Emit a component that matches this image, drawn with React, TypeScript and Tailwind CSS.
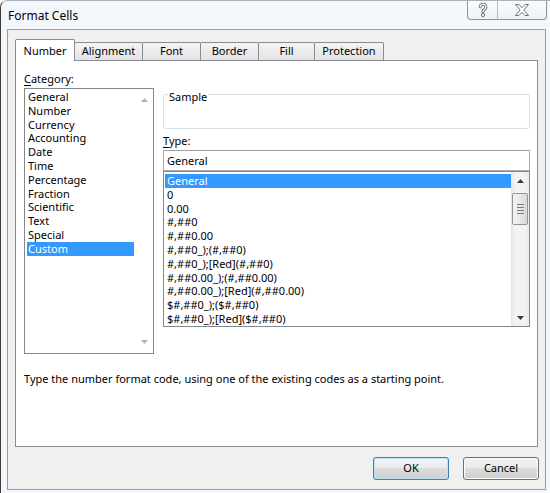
import React from 'react';

const categories = [
  'General',
  'Number',
  'Currency',
  'Accounting',
  'Date',
  'Time',
  'Percentage',
  'Fraction',
  'Scientific',
  'Text',
  'Special',
  'Custom',
];

const types = [
  'General',
  '0',
  '0.00',
  '#,##0',
  '#,##0.00',
  '#,##0_);(#,##0)',
  '#,##0_);[Red](#,##0)',
  '#,##0.00_);(#,##0.00)',
  '#,##0.00_);[Red](#,##0.00)',
  '$#,##0_);($#,##0)',
  '$#,##0_);[Red]($#,##0)',
];

const tabs = [
  { label: 'Number', w: 'w-[60px]', active: true },
  { label: 'Alignment', w: 'w-[69px]' },
  { label: 'Font', w: 'w-[59px]' },
  { label: 'Border', w: 'w-[59px]' },
  { label: 'Fill', w: 'w-[57px]' },
  { label: 'Protection', w: 'w-[70px]' },
];

const Arrow = ({ up, color }: { up?: boolean; color: string }) => (
  <svg width="7" height="4" viewBox="0 0 7 4">
    <polygon points={up ? '0,4 3.5,0 7,4' : '0,0 7,0 3.5,4'} fill={color} />
  </svg>
);

const App: React.FC = () => {
  return (
    <div className="w-[550px] h-[493px] overflow-hidden flex flex-col bg-[#f3f7fb] rounded-tl-[7px] border-l border-t border-l-[#3a3a3a] border-t-[#aab3bd] font-['Noto_Sans',sans-serif] text-[11px] text-black">
      {/* title bar */}
      <div className="h-[28px] flex justify-between">
        <div className="pl-[7px] pt-[7px] leading-[16px] text-[12px]">Format Cells</div>
        <div className="flex h-[20px] -mt-px mr-[3px] border border-t-0 border-[#8d949c] rounded-b-[4px] bg-[linear-gradient(#fbfcfd,#eef2f6)]">
          <div className="w-[30px] flex items-center justify-center border-r border-[#b5bcc4]">
            <svg width="10" height="14" viewBox="0 0 10 14">
              <path d="M2.2 4 a2.8 2.8 0 1 1 4.2 2.4 c-1.2 0.7 -1.4 1.3 -1.4 2.6" fill="none" stroke="#6e6e6e" strokeWidth="3" strokeLinecap="round" />
              <path d="M2.2 4 a2.8 2.8 0 1 1 4.2 2.4 c-1.2 0.7 -1.4 1.3 -1.4 2.6" fill="none" stroke="#ffffff" strokeWidth="1.2" strokeLinecap="round" />
              <circle cx="5" cy="12" r="1.6" fill="#ffffff" stroke="#6e6e6e" strokeWidth="1" />
            </svg>
          </div>
          <div className="w-[48px] flex items-center justify-center">
            <svg width="14" height="12" viewBox="0 0 14 12">
              <polygon
                points="0.5,0.5 3.8,0.5 7,3.7 10.2,0.5 13.5,0.5 8.8,6 13.5,11.5 10.2,11.5 7,8.3 3.8,11.5 0.5,11.5 5.2,6"
                fill="#ffffff"
                stroke="#6e6e6e"
                strokeWidth="1"
              />
            </svg>
          </div>
        </div>
      </div>

      {/* client area */}
      <div className="ml-[6px] mr-[4px] h-[461px] border border-[#9c9c9c] bg-[#f0f0f0] px-[7px] pt-[9px]">
        {/* tabs */}
        <div className="flex items-end h-[21px] relative z-10">
          {tabs.map((t, i) =>
            t.active ? (
              <div
                key={t.label}
                className={`${t.w} h-[22px] -mb-px flex items-center justify-center pt-[2px] bg-white border border-b-0 border-[#898c95] rounded-t-[2px] relative z-10`}
              >
                {t.label}
              </div>
            ) : (
              <div
                key={t.label}
                className={`${t.w} h-[18px] -ml-px flex items-center justify-center border border-b-0 border-[#898c95] rounded-t-[2px] bg-linear-to-b from-[#f4f4f4] to-[#e3e3e3] ${i === 1 ? 'ml-[-1px]' : ''}`}
              >
                {t.label}
              </div>
            )
          )}
        </div>

        {/* panel */}
        <div className="h-[387px] border border-[#898c95] bg-white">
          <div className="flex pl-[8px] pt-[10px]">
            {/* category column */}
            <div className="w-[130px] flex flex-col">
              <div className="h-[15px] leading-[15px]">
                <span className="underline underline-offset-2">C</span>ategory:
              </div>
              <div className="mt-[2px] h-[266px] border border-[#828790] flex">
                <div className="flex-1 px-[2px] pt-px">
                  {categories.map((c) => (
                    <div
                      key={c}
                      className={`h-[13.8px] leading-[13.8px] pl-px whitespace-nowrap ${
                        c === 'Custom' ? 'bg-[#3399ff] text-white' : ''
                      }`}
                    >
                      {c}
                    </div>
                  ))}
                </div>
                <div className="w-[17px] flex flex-col justify-between items-center py-[9px]">
                  <Arrow up color="#b0b0b0" />
                  <Arrow color="#b0b0b0" />
                </div>
              </div>
            </div>

            {/* right column */}
            <div className="ml-[9px] w-[367px] flex flex-col">
              <div className="mt-[23px] h-[35px] border border-[#d5dfe5] rounded-[3px] relative">
                <span className="absolute left-[4px] top-[-6px] bg-white px-px leading-[15px]">Sample</span>
              </div>
              <div className="mt-[4px] h-[15px] leading-[15px]">
                <span className="underline underline-offset-2">T</span>ype:
              </div>
              <div className="mt-[2px] h-[21px] border border-[#abadb3] border-t-[#a0a2a8] pl-[3px] leading-[19px]">
                General
              </div>
              <div className="h-[156px] border border-[#828790] flex">
                <div className="flex-1 pl-px pt-[2px]">
                  {types.map((t, i) => (
                    <div
                      key={t}
                      className={`h-[13.8px] leading-[13.8px] pl-[2px] whitespace-nowrap ${
                        i === 0 ? 'bg-[#3399ff] text-white' : ''
                      }`}
                    >
                      {t}
                    </div>
                  ))}
                </div>
                <div className="w-[18px] flex flex-col bg-[linear-gradient(to_right,#e6e6e6,#f3f3f3_25%,#f3f3f3_75%,#e9e9e9)]">
                  <div className="h-[17px] flex items-center justify-center">
                    <Arrow up color="#3c3c3c" />
                  </div>
                  <div className="mt-[4px] mx-px h-[32px] border border-[#959595] rounded-[2px] bg-[linear-gradient(to_right,#f4f4f4,#e8e8e8_50%,#d8d8d8)] flex flex-col items-center justify-center gap-[2px]">
                    <div className="w-[7px] h-px bg-[#7a7a7a]" />
                    <div className="w-[7px] h-px bg-[#7a7a7a]" />
                    <div className="w-[7px] h-px bg-[#7a7a7a]" />
                    <div className="w-[7px] h-px bg-[#7a7a7a]" />
                  </div>
                  <div className="flex-1" />
                  <div className="h-[17px] flex items-center justify-center">
                    <Arrow color="#3c3c3c" />
                  </div>
                </div>
              </div>
            </div>
          </div>
          <div className="mt-[17px] pl-[8px] leading-[15px]">
            Type the number format code, using one of the existing codes as a starting point.
          </div>
        </div>

        {/* buttons */}
        <div className="mt-[10px] -mr-px flex justify-end gap-[14px]">
          <button className="w-[76px] h-[23px] rounded-[3px] border border-[#3c7fb1] shadow-[inset_0_0_0_1px_#bfe4f9] bg-[linear-gradient(#f2f2f2_0%,#ebebeb_50%,#dddddd_50%,#cfcfcf_100%)] text-[11px]">
            OK
          </button>
          <button className="w-[76px] h-[23px] rounded-[3px] border border-[#707070] shadow-[inset_0_0_0_1px_#fbfbfb] bg-[linear-gradient(#f2f2f2_0%,#ebebeb_50%,#dddddd_50%,#cfcfcf_100%)] text-[11px]">
            Cancel
          </button>
        </div>
      </div>
    </div>
  );
};

export default App;
